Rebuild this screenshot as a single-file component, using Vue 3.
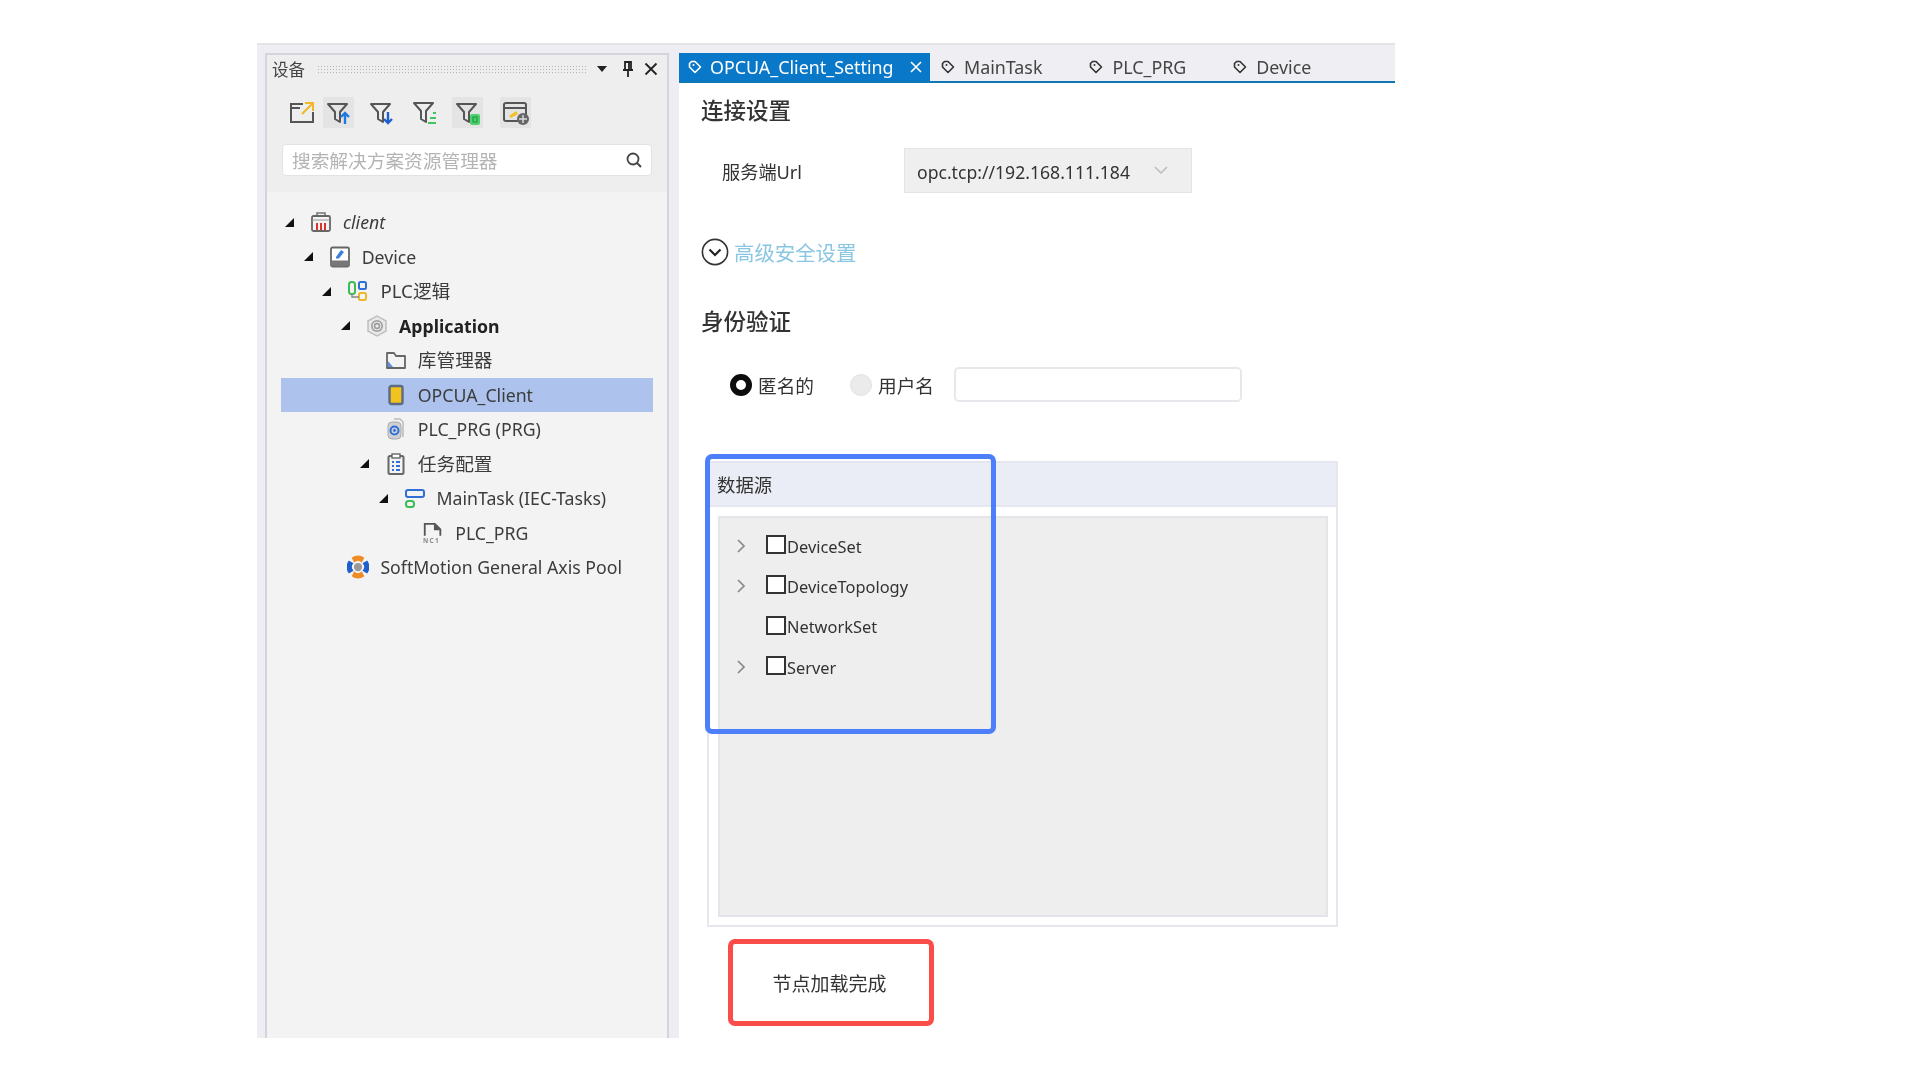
<script setup>
const rows = [
  { label: 'client', level: 0, arrow: true, icon: 'client', italic: true },
  { label: 'Device', level: 1, arrow: true, icon: 'device' },
  { label: 'PLC逻辑', level: 2, arrow: true, icon: 'plc', cjk: true },
  { label: 'Application', level: 3, arrow: true, icon: 'app', bold: true },
  { label: '库管理器', level: 4, icon: 'lib', cjk: true },
  { label: 'OPCUA_Client', level: 4, icon: 'opc', selected: true },
  { label: 'PLC_PRG (PRG)', level: 4, icon: 'prg' },
  { label: '任务配置', level: 4, arrow: true, icon: 'task', cjk: true },
  { label: 'MainTask (IEC-Tasks)', level: 5, arrow: true, icon: 'main' },
  { label: 'PLC_PRG', level: 6, icon: 'nc' },
  { label: 'SoftMotion General Axis Pool', level: 2, icon: 'soft' },
]
const tabs = ['MainTask', 'PLC_PRG', 'Device']
const sources = [
  { label: 'DeviceSet', more: true },
  { label: 'DeviceTopology', more: true },
  { label: 'NetworkSet', more: false },
  { label: 'Server', more: true },
]
const rowIndent = (level) => ({ paddingLeft: `${level * 18.7}px` })
</script>

<template>
  <div class="page">
    <div class="window">
      <aside class="side">
        <div class="panel">
          <div class="panel-head">
            <div class="title-row">
              <span class="title">设备</span>
              <span class="grip"></span>
              <svg class="t-arrow" width="12" height="8" viewBox="0 0 12 8"><path d="M1 1h10L6 7z" fill="#222"/></svg>
              <svg class="t-pin" width="14" height="18" viewBox="0 0 14 18"><path d="M4 2h6v8H4zM2 10h10M7 10v7M8 2v8" fill="none" stroke="#222" stroke-width="1.8"/></svg>
              <svg class="t-x" width="14" height="14" viewBox="0 0 14 14"><path d="M1.5 1.5l11 11M12.5 1.5l-11 11" stroke="#222" stroke-width="1.8"/></svg>
            </div>
            <div class="toolbar">
              <span class="tool">
                <svg width="28" height="24" viewBox="0 0 28 24"><path d="M15 3H3v18h22V11" fill="none" stroke="#555" stroke-width="2"/><path d="M3 7h9" stroke="#555" stroke-width="2"/><path d="M14 13L24 3M17 2h8v8" fill="none" stroke="#f2b824" stroke-width="2"/></svg>
              </span>
              <span class="tool on">
                <svg width="26" height="26" viewBox="0 0 26 26"><path d="M2 4h19l-7 8v10l-5-3v-7z" fill="none" stroke="#555" stroke-width="2" stroke-linejoin="round"/><path d="M19 24V13M15 17l4-4 4 4" fill="none" stroke="#1e78e0" stroke-width="2.4"/></svg>
              </span>
              <span class="tool">
                <svg width="26" height="26" viewBox="0 0 26 26"><path d="M2 4h19l-7 8v10l-5-3v-7z" fill="none" stroke="#555" stroke-width="2" stroke-linejoin="round"/><path d="M19 12v11M15 19l4 4 4-4" fill="none" stroke="#1e5fd0" stroke-width="2.4"/></svg>
              </span>
              <span class="tool">
                <svg width="26" height="26" viewBox="0 0 26 26"><path d="M2 3h19l-7 8v11l-5-3v-8z" fill="none" stroke="#555" stroke-width="2" stroke-linejoin="round"/><path d="M21 13h3M18 18h6M16 23h8" stroke="#43c463" stroke-width="2.2"/></svg>
              </span>
              <span class="tool on">
                <svg width="26" height="26" viewBox="0 0 26 26"><path d="M2 4h19l-7 8v10l-5-3v-7z" fill="none" stroke="#555" stroke-width="2" stroke-linejoin="round"/><rect x="15" y="14" width="10" height="11" rx="2" fill="#4fd06e"/><rect x="18" y="17" width="4" height="5" fill="none" stroke="#1f9d45" stroke-width="1.2"/></svg>
              </span>
              <span class="tool on">
                <svg width="28" height="26" viewBox="0 0 28 26"><rect x="2" y="3" width="22" height="18" rx="2" fill="none" stroke="#555" stroke-width="2"/><path d="M2 8h22" stroke="#555" stroke-width="2"/><path d="M7 16l7-5 2 3-7 4z" fill="#f3c02c"/><circle cx="21" cy="19" r="6" fill="#666"/><path d="M21 15v8M17 19h8" stroke="#ddd" stroke-width="1.4"/></svg>
              </span>
            </div>
            <div class="search">
              <span class="search-text">搜索解决方案资源管理器</span>
              <svg width="18" height="18" viewBox="0 0 18 18"><circle cx="8" cy="8" r="5.5" fill="none" stroke="#444" stroke-width="1.8"/><path d="M12 12l4 4" stroke="#444" stroke-width="2"/></svg>
            </div>
          </div>

          <div class="tree">
            <div
              v-for="row in rows"
              :key="row.label"
              class="row"
              :class="{ selected: row.selected }"
              :style="rowIndent(row.level)"
            >
              <span class="arrow-slot">
                <svg v-if="row.arrow" width="9" height="9" viewBox="0 0 9 9"><path d="M9 0v9H0z" fill="#111"/></svg>
              </span>
              <span class="icon-slot">
                <svg v-if="row.icon === 'client'" width="22" height="22" viewBox="0 0 22 22"><path d="M7 5V2h8v3" fill="none" stroke="#777" stroke-width="1.6"/><rect x="2" y="5" width="18" height="15" rx="1.5" fill="none" stroke="#666" stroke-width="1.8"/><path d="M7 12v7M11 12v7M15 12v7" stroke="#d9342b" stroke-width="2"/><path d="M2 9h18" stroke="#999" stroke-width="1"/></svg>
                <svg v-else-if="row.icon === 'device'" width="22" height="22" viewBox="0 0 22 22"><rect x="2" y="1.5" width="18" height="19" rx="1.5" fill="#fff" stroke="#666" stroke-width="1.8"/><path d="M7 11l5-7 3 2-5 6.5H7z" fill="#3f7fd8"/><path d="M2 14.5h18v6H2z" fill="#777"/></svg>
                <svg v-else-if="row.icon === 'plc'" width="22" height="22" viewBox="0 0 22 22"><rect x="2" y="2" width="6" height="12" rx="2.5" fill="none" stroke="#3dbb55" stroke-width="2"/><rect x="12" y="2" width="7" height="7" rx="1.5" fill="none" stroke="#2f6fd6" stroke-width="2"/><rect x="12" y="13" width="7" height="7" rx="1.5" fill="none" stroke="#efb82b" stroke-width="2"/><path d="M5 14v3h7" fill="none" stroke="#888" stroke-width="1.4"/></svg>
                <svg v-else-if="row.icon === 'app'" width="22" height="22" viewBox="0 0 22 22"><path d="M11 1l9 5v10l-9 5-9-5V6z" fill="#e8e8e8" stroke="#bbb" stroke-width="1.4"/><circle cx="11" cy="11" r="6" fill="#a0a0a0"/><circle cx="11" cy="11" r="4" fill="none" stroke="#eee" stroke-width="1"/><circle cx="11" cy="11" r="1.6" fill="#eee"/></svg>
                <svg v-else-if="row.icon === 'lib'" width="22" height="22" viewBox="0 0 22 22"><path d="M2 4h7l2 3h9v12H2z" fill="none" stroke="#666" stroke-width="1.8" stroke-linejoin="round"/><path d="M3 12l5 6H3z" fill="#5b8fe0"/></svg>
                <svg v-else-if="row.icon === 'opc'" width="22" height="22" viewBox="0 0 22 22"><rect x="4.5" y="2" width="13" height="18" rx="2" fill="#f2c21e" stroke="#5b6b84" stroke-width="2.4"/></svg>
                <svg v-else-if="row.icon === 'prg'" width="22" height="22" viewBox="0 0 22 22"><path d="M9 1h6l3 3v15" fill="none" stroke="#bbb" stroke-width="1.5"/><rect x="3" y="4" width="13" height="17" rx="4" fill="#d0d0d4" stroke="#aaa"/><circle cx="9.5" cy="12.5" r="4" fill="none" stroke="#2f6fd6" stroke-width="2"/><circle cx="9.5" cy="12.5" r="1.4" fill="#2f6fd6"/></svg>
                <svg v-else-if="row.icon === 'task'" width="22" height="22" viewBox="0 0 22 22"><rect x="3.5" y="3" width="15" height="18" rx="1.5" fill="none" stroke="#666" stroke-width="2"/><rect x="7" y="1" width="8" height="4" fill="#fff" stroke="#666" stroke-width="1.4"/><path d="M7 9h2M11 9h4M7 13h2M11 13h4M7 17h2M11 17h4" stroke="#2f6fd6" stroke-width="2"/></svg>
                <svg v-else-if="row.icon === 'main'" width="22" height="22" viewBox="0 0 22 22"><rect x="2" y="3" width="18" height="7" rx="2" fill="none" stroke="#2f6fd6" stroke-width="2"/><rect x="2" y="14" width="8" height="6" rx="2.5" fill="none" stroke="#3dbb55" stroke-width="2"/></svg>
                <svg v-else-if="row.icon === 'nc'" width="24" height="24" viewBox="0 0 24 24"><path d="M3 15V2h11l6 6v7" fill="none" stroke="#555" stroke-width="2"/><path d="M13 2v7h7" fill="#555"/><text x="1" y="23" class="nc-text">NC1</text></svg>
                <svg v-else-if="row.icon === 'soft'" width="24" height="24" viewBox="0 0 24 24"><circle cx="12" cy="12" r="8" fill="none" stroke="#ddd" stroke-width="1"/><path d="M5 2a12 12 0 0 1 14 0l-3 5a6 6 0 0 0-8 0zM5 22a12 12 0 0 0 14 0l-3-5a6 6 0 0 1-8 0z" fill="#f08a24"/><path d="M2 5a12 12 0 0 0 0 14l5-3a6 6 0 0 1 0-8zM22 5a12 12 0 0 1 0 14l-5-3a6 6 0 0 0 0-8z" fill="#1f5fc9"/><circle cx="12" cy="12" r="4.5" fill="#999"/></svg>
              </span>
              <span class="label" :class="{ italic: row.italic, bold: row.bold, cjk: row.cjk }">{{ row.label }}</span>
            </div>
          </div>
        </div>
      </aside>

      <main class="main">
        <div class="tabbar">
          <div class="tab active">
            <svg class="tag" width="14" height="14" viewBox="0 0 14 14"><path d="M7 1.5l5.5 5.5L7 12.5 1.5 7V3.5l2-2z" fill="none" stroke="#fff" stroke-width="1.6" stroke-linejoin="round"/><circle cx="5.5" cy="5" r="1" fill="#fff"/></svg>
            <span class="tab-name">OPCUA_Client_Setting</span>
            <svg class="tab-x" width="12" height="12" viewBox="0 0 12 12"><path d="M1 1l10 10M11 1L1 11" stroke="#fff" stroke-width="1.7"/></svg>
          </div>
          <div v-for="t in tabs" :key="t" class="tab">
            <svg class="tag" width="14" height="14" viewBox="0 0 14 14"><path d="M7 1.5l5.5 5.5L7 12.5 1.5 7V3.5l2-2z" fill="none" stroke="#333" stroke-width="1.6" stroke-linejoin="round"/><circle cx="5.5" cy="5" r="1" fill="#333"/></svg>
            <span class="tab-name">{{ t }}</span>
          </div>
        </div>

        <div class="content">
          <h2 class="heading first">连接设置</h2>
          <div class="url-row">
            <span class="url-label">服务端Url</span>
            <div class="select">
              <span>opc.tcp://192.168.111.184</span>
              <svg width="14" height="9" viewBox="0 0 14 9"><path d="M1 1l6 6 6-6" fill="none" stroke="#bcbcbc" stroke-width="1.5"/></svg>
            </div>
          </div>
          <div class="advanced">
            <svg width="28" height="28" viewBox="0 0 28 28"><circle cx="14" cy="14" r="12.6" fill="#fff" stroke="#333" stroke-width="1.6"/><path d="M8.5 11.5l5.5 5.5 5.5-5.5" fill="none" stroke="#222" stroke-width="2.2"/></svg>
            <span>高级安全设置</span>
          </div>

          <h2 class="heading second">身份验证</h2>
          <div class="auth-row">
            <span class="radio checked"></span>
            <span class="radio-text">匿名的</span>
            <span class="radio"></span>
            <span class="radio-text user">用户名</span>
            <span class="input"></span>
          </div>

          <section class="source">
            <div class="source-head">数据源</div>
            <div class="source-body">
              <div class="source-list">
                <div v-for="s in sources" :key="s.label" class="source-row">
                  <span class="chev">
                    <svg v-if="s.more" width="9" height="14" viewBox="0 0 9 14"><path d="M1 1l6 6-6 6" fill="none" stroke="#888" stroke-width="1.7"/></svg>
                  </span>
                  <span class="check"></span>
                  <span class="source-label">{{ s.label }}</span>
                </div>
              </div>
            </div>
            <div class="blue-mark"></div>
          </section>

          <div class="status">节点加载完成</div>
        </div>
      </main>
    </div>
  </div>
</template>

<style>
html, body { margin: 0; background: #fff; }
</style>

<style scoped>
.page {
  width: 1920px;
  height: 1080px;
  padding: 43px 0 0 257px;
  box-sizing: border-box;
  background: #fff;
  font-family: "Noto Sans", "Noto Sans CJK SC", sans-serif;
  color: #333;
  overflow: hidden;
}
.window {
  width: 1138px;
  height: 995px;
  display: flex;
  border-top: 2px solid #e4e4e6;
  box-sizing: border-box;
  background: #fff;
  filter: blur(0.4px);
}
.side {
  width: 422px;
  flex: none;
  padding: 8px 10px 0 8px;
  box-sizing: border-box;
  background: #eeedf3;
}
.panel {
  height: 100%;
  box-sizing: border-box;
  border: 2px solid #d5d4dc;
  border-bottom: none;
  background: #f3f3f3;
}
.panel-head {
  height: 137px;
  background: #eeeeee;
  box-sizing: border-box;
}
.title-row {
  height: 27px;
  display: flex;
  align-items: center;
  padding-left: 5px;
  color: #444;
  font-size: 16.5px;
}
.title { width: 45px; flex: none; }
.grip {
  width: 270px;
  height: 8px;
  flex: none;
  background-image: radial-gradient(#b4b4b4 0.8px, transparent 0.9px);
  background-size: 3px 3px;
}
.t-arrow { margin-left: 9px; }
.t-pin { margin-left: 13px; }
.t-x { margin-left: 9px; }
.toolbar {
  display: flex;
  align-items: center;
  height: 31px;
  margin-top: 15px;
  padding-left: 19px;
}
.tool {
  width: 31px;
  height: 31px;
  display: flex;
  align-items: center;
  justify-content: center;
  margin-right: 12px;
}
.tool:first-child { margin-right: 6px; }
.tool:nth-child(5) { margin-right: 17px; }
.tool.on { background: #e4e4e4; }
.search {
  margin: 16px 0 0 15px;
  width: 370px;
  height: 32px;
  box-sizing: border-box;
  background: #fff;
  border: 1px solid #e2e2e2;
  border-radius: 4px;
  display: flex;
  align-items: center;
  justify-content: space-between;
  padding: 0 8px 0 9px;
}
.search-text { font-size: 18.7px; color: #b4b4b4; line-height: 1; padding-top: 2px; }
.tree { padding-top: 13px; }
.row {
  height: 34.5px;
  margin: 0 0 0 14px;
  width: 372px;
  display: flex;
  align-items: center;
  box-sizing: border-box;
  font-size: 17.7px;
  color: #3c3c3c;
}
.row.selected { background: #adc3ee; }
.arrow-slot {
  width: 20px;
  padding-left: 4px;
  box-sizing: border-box;
  flex: none;
  display: flex;
  align-items: center;
}
.icon-slot {
  width: 22px;
  height: 24px;
  margin: 0 0 0 9px;
  flex: none;
  display: flex;
  align-items: center;
  justify-content: center;
}
.label { margin-left: 11px; white-space: nowrap; }
.label.cjk { font-size: 18.7px; margin-top: -3px; }
.italic { font-style: italic; }
.bold { font-weight: 700; color: #222; }
.nc-text { font-size: 7px; letter-spacing: 1.5px; fill: #888; font-weight: 700; }

.main {
  flex: 1;
  min-width: 0;
  display: flex;
  flex-direction: column;
}
.tabbar {
  height: 38px;
  flex: none;
  padding-top: 8px;
  box-sizing: border-box;
  display: flex;
  background: #eeeef3;
  border-bottom: 2px solid #0f78b4;
}
.tab {
  height: 28px;
  display: flex;
  align-items: center;
  font-size: 17.85px;
  color: #444;
  margin-left: 11px;
  margin-right: 36px;
}
.tab .tag { margin-right: 9px; flex: none; }
.tab.active {
  width: 251px;
  margin: 0;
  padding-left: 9px;
  box-sizing: border-box;
  background: #0a78c8;
  color: #fff;
}
.tab.active .tag { margin-right: 8px; }
.tab-x { margin-left: 16px; }
.content {
  flex: 1;
  padding-left: 22px;
  position: relative;
}
.heading {
  margin: 0;
  font-size: 22.5px;
  line-height: 30px;
  font-weight: 500;
  color: #333;
}
.first { margin-top: 13px; }
.url-row {
  display: flex;
  align-items: center;
  margin-top: 22px;
  padding-left: 21px;
}
.url-label { width: 182px; font-size: 18.2px; }
.select {
  width: 288px;
  height: 45px;
  box-sizing: border-box;
  border: 1px solid #e4e4e4;
  background: #efefef;
  display: flex;
  align-items: center;
  padding-left: 12px;
  font-size: 17.6px;
}
.select span { width: 237px; flex: none; white-space: nowrap; padding-top: 2px; }
.advanced {
  display: flex;
  align-items: center;
  margin-top: 45px;
  color: #8ac6e2;
  font-size: 20.4px;
  height: 28px;
}
.advanced svg { margin-right: 5px; }
.second { margin-top: 41px; }
.auth-row {
  display: flex;
  align-items: center;
  margin-top: 30px;
  padding-left: 29px;
  height: 35px;
  font-size: 18.7px;
}
.radio {
  width: 22px;
  height: 22px;
  flex: none;
  box-sizing: border-box;
  border-radius: 50%;
  background: #ebebeb;
  border: 1px solid #e2e2e2;
  margin-right: 6px;
}
.radio.checked { background: #fff; border: 6px solid #0c0c0c; }
.radio-text { width: 92px; flex: none; }
.radio-text.user { width: 76px; }
.input {
  width: 288px;
  height: 35px;
  box-sizing: border-box;
  border: 2px solid #e8e8ec;
  border-radius: 5px;
  background: #fff;
}
.source {
  position: relative;
  width: 631px;
  height: 466px;
  box-sizing: border-box;
  margin: 59px 0 0 6px;
  border: 2px solid #e6e7ee;
  display: flex;
  flex-direction: column;
}
.source-head {
  height: 42px;
  flex: none;
  display: flex;
  align-items: center;
  padding-left: 8px;
  background: #eaedf5;
  font-size: 18.4px;
  border-bottom: 2px solid #e6e7ee;
}
.source-body {
  margin: 9px 8px 8px 9px;
  flex: 1;
  background: #eeeeee;
  border: 2px solid #e4e4ea;
  box-sizing: border-box;
}
.source-list { padding-top: 8px; }
.source-row {
  height: 40.3px;
  display: flex;
  align-items: center;
  font-size: 16.4px;
  color: #333;
}
.chev { width: 46px; padding-left: 17px; box-sizing: border-box; display: flex; flex: none; }
.check {
  width: 20px;
  height: 19px;
  flex: none;
  box-sizing: border-box;
  border: 2px solid #333;
  background: #fff;
  margin-top: -3px;
  margin-right: 1px;
}
.blue-mark {
  position: absolute;
  left: -4px;
  top: -9px;
  width: 291px;
  height: 280px;
  box-sizing: border-box;
  border: 5px solid #4d7ffb;
  border-radius: 7px;
  pointer-events: none;
}
.status {
  width: 206px;
  height: 87px;
  box-sizing: border-box;
  margin: 12px 0 0 27px;
  padding-right: 3px;
  border: 5px solid #fa4c48;
  border-radius: 7px;
  display: flex;
  align-items: center;
  justify-content: center;
  font-size: 19px;
  color: #333;
}
</style>
